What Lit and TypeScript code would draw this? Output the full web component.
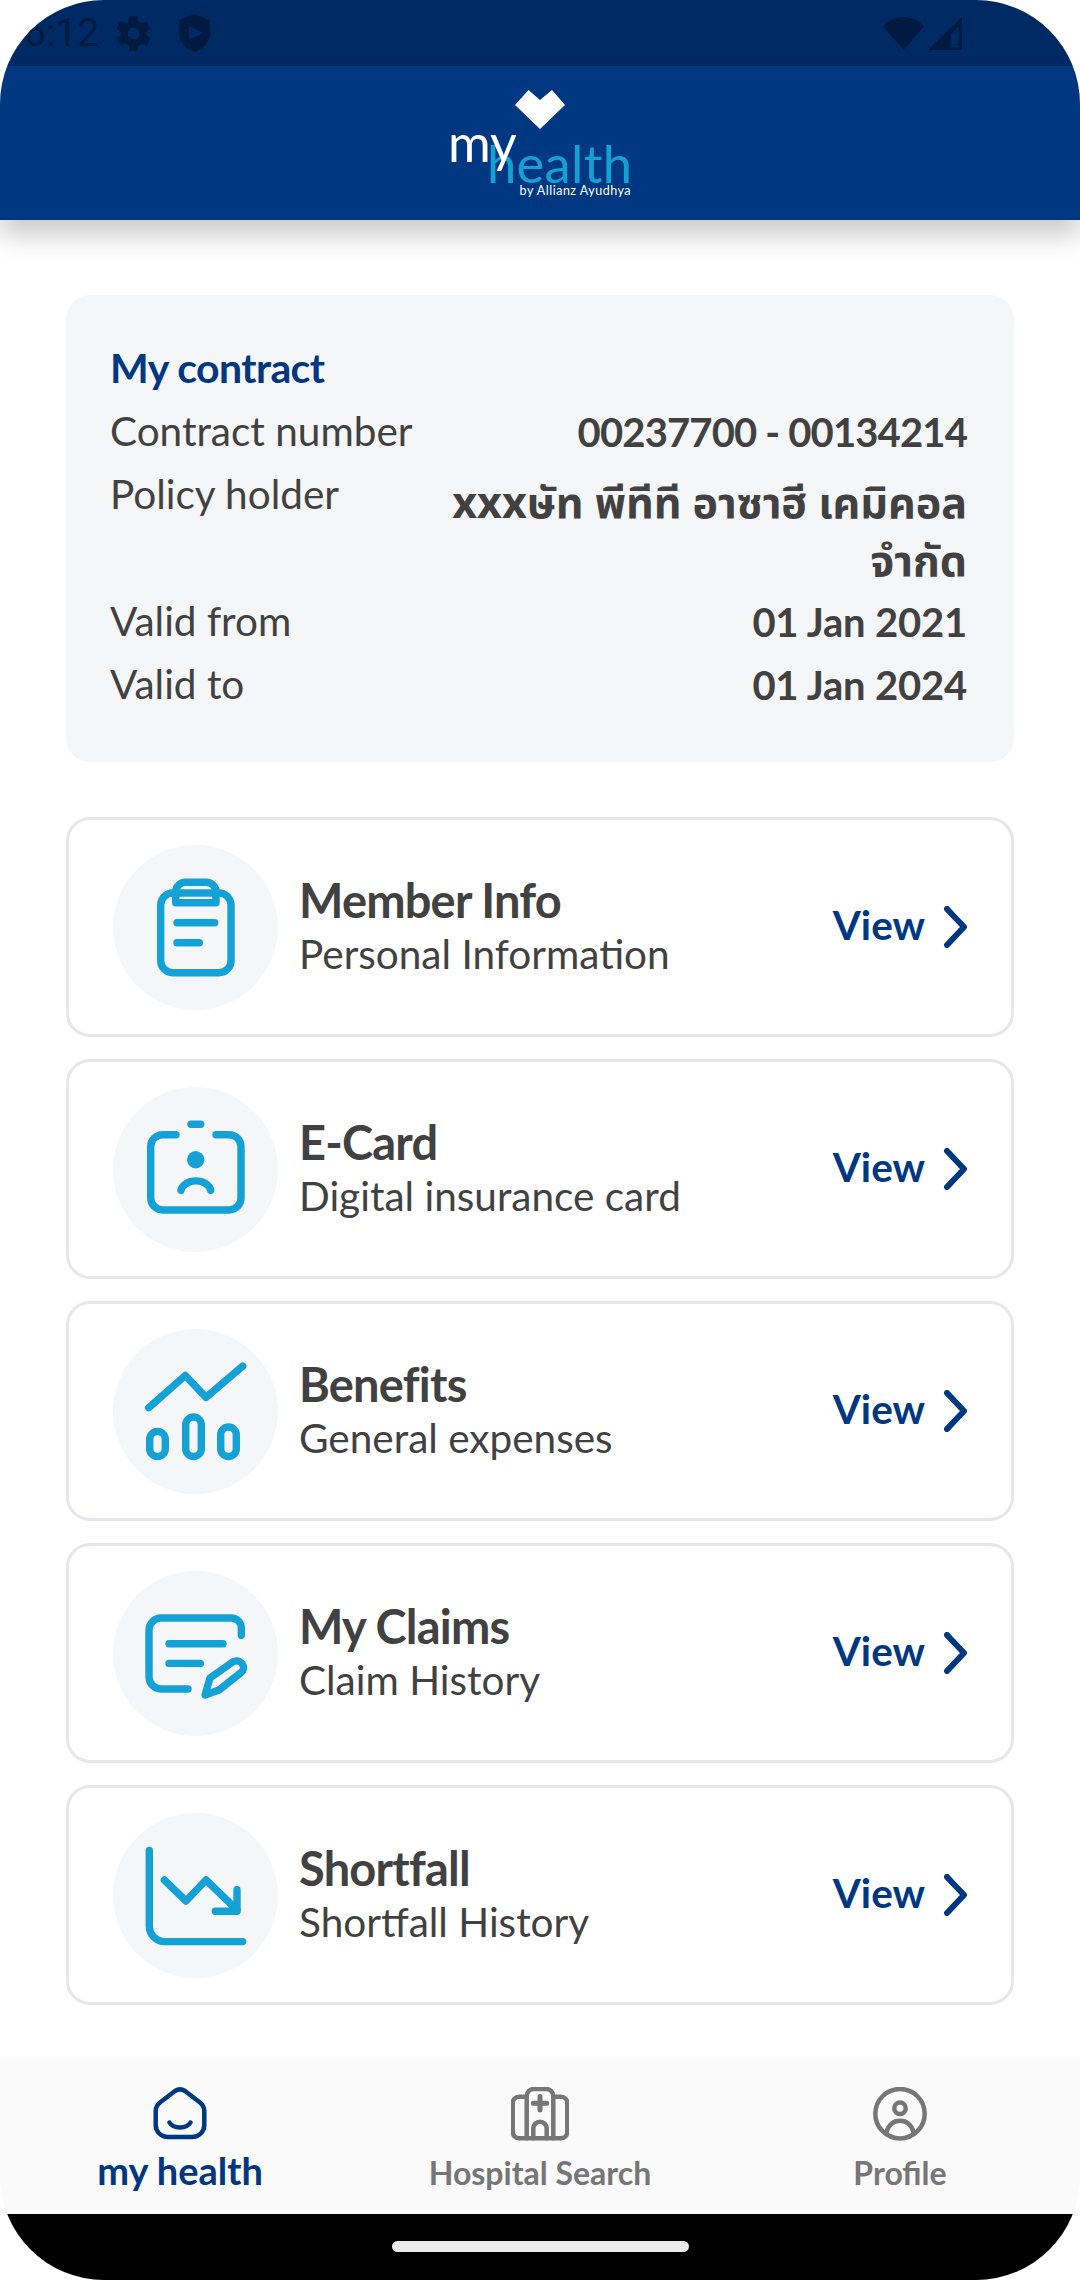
import { LitElement, html, css, svg } from "lit";
import { customElement } from "lit/decorators.js";

const iconMember = svg`
  <rect x="47.7" y="48" width="70.3" height="79.7" rx="12"/>
  <path d="M62.7 57.7V47a9.7 9.7 0 0 1 9.7-9.7h20.9A9.7 9.7 0 0 1 103 47v10.7z"/>
  <path d="M64 77.7h37.7M64 97.7h22.3"/>`;
const iconCard = svg`
  <path d="M63 47.7H49.7a12 12 0 0 0-12 12V111a12 12 0 0 0 12 12H116a12 12 0 0 0 12-12V59.7a12 12 0 0 0-12-12h-13"/>
  <path d="M78 37.3h9.7"/>
  <circle class="fill" cx="82.7" cy="72.7" r="8.7"/>
  <path d="M68 103.3a15 11 0 0 1 29.7 0"/>`;
const iconBenefits = svg`
  <path d="M35.7 78.7L72.3 46.5 93 68.4 129.7 37.1"/>
  <rect x="36.7" y="102.5" width="15.6" height="25" rx="7.8"/>
  <rect x="72.7" y="88" width="15.6" height="39.5" rx="7.8"/>
  <rect x="107.7" y="98" width="15.6" height="29.5" rx="7.8"/>`;
const iconClaims = svg`
  <path d="M128.3 64.3V57a10 10 0 0 0-10-10H48a12 12 0 0 0-12 12v47a12 12 0 0 0 12 12h27"/>
  <path d="M56 72.8h54M56 92.4h31.3"/>
  <path d="M92 124l5-17 22-15.500c3.500-2.500 7.500-2 10 1s2 7-1.500 9.500L106 119z"/>`;
const iconShortfall = svg`
  <path d="M36.300 37.500V113a15.600 15.600 0 0 0 15.600 15.600H129.700"/>
  <path d="M51.300 67L73 88 93 67 124 97"/>
  <path d="M124 76.800V98.200H102.300"/>`;

const rows = [
  { t: "Member Info", s: "Personal Information", i: iconMember },
  { t: "E-Card", s: "Digital insurance card", i: iconCard },
  { t: "Benefits", s: "General expenses", i: iconBenefits },
  { t: "My Claims", s: "Claim History", i: iconClaims },
  { t: "Shortfall", s: "Shortfall History", i: iconShortfall },
];

@customElement("app-root")
export class AppRoot extends LitElement {
  static styles = css`
    :host { display: block; width: 1080px; height: 2280px; background: #fff; overflow: hidden;
      font-family: "Lato", "Noto Sans", "Noto Sans Thai", sans-serif; color: #414141; }
    * { box-sizing: border-box; }
    .screen { width: 1080px; height: 2280px; border-radius: 104px; overflow: hidden; background: #fff;
      display: flex; flex-direction: column; }
    .status { height: 66px; flex: none; background: #002a63; display: flex; align-items: center;
      padding: 0 118px 0 24px; color: #001a42; }
    .time { font: 400 39px Roboto, sans-serif; width: 93px; }
    .status svg { display: block; fill: #001a42; }
    .shield { margin-left: 29px; }
    .wifi { margin-left: auto; }
    .signal { margin-left: 4px; }
    .header { height: 154px; flex: none; background: #003781; display: flex; justify-content: center;
      box-shadow: 0 16px 24px rgba(0,0,0,.2); position: relative; }
    .logo { position: relative; width: 182px; height: 154px; }
    .logo > * { position: absolute; white-space: nowrap; line-height: 1; }
    .heart { left: 66px; top: 24px; }
    .my { left: -1px; top: 50px; font-size: 52px; font-weight: 400; color: #fff; z-index: 1; }
    .health { left: 38px; top: 71px; font-size: 52.500px; font-weight: 400; color: #13a0d3; letter-spacing: .3px; }
    .by { right: 0; top: 119px; font-size: 12.500px; font-weight: 400; color: #fff; letter-spacing: .5px; }
    main { flex: 1; padding: 75px 66px 0; display: flex; flex-direction: column; }
    .contract { height: 467px; flex: none; background: #f5f6f8; border-radius: 24px; padding: 43px 47px 0 44px; }
    .contract h2 { margin: 0 0 3px; font-size: 41px; line-height: 60px; font-weight: 700; color: #003781; letter-spacing: -.57px; }
    .kv { display: flex; justify-content: space-between; font-size: 40.500px; line-height: 63px; }
    .kv .k { flex: none; font-weight: 400; line-height: 60px; }
    .kv .v { font-size: 40px; font-weight: 700; text-align: right; max-width: 560px; letter-spacing: -.2px; }
    .kv .v.num { letter-spacing: -.85px; }
    .kv .v.th { font-family: "Noto Sans", "Lato", "Noto Sans Thai", sans-serif; font-size: 43px; line-height: 58px; padding: 9px 0 2px; letter-spacing: 0; }
    .list { margin-top: 55px; display: flex; flex-direction: column; gap: 22px; }
    .row { height: 220px; border: 3px solid #e6e7eb; border-radius: 24px; background: #fff; display: flex;
      align-items: center; padding: 0 44px 0 44px; }
    .circle { width: 165px; height: 165px; border-radius: 50%; background: #f5f6f8; flex: none; }
    .circle svg { display: block; fill: none; stroke: #14a1d6; stroke-width: 7.400; stroke-linecap: round; stroke-linejoin: round; }
    .circle .fill { fill: #14a1d6; stroke: none; }
    .txt { margin-left: 21px; flex: 1; }
    .t { font-size: 47px; font-weight: 700; line-height: 54px; letter-spacing: -.8px; }
    .s { font-size: 40.500px; font-weight: 400; line-height: 54px; }
    .view { font-size: 40.500px; font-weight: 700; color: #003781; margin-bottom: 5px; }
    .chev { margin-left: 18px; display: block; fill: none; stroke: #003781; stroke-width: 6; stroke-linecap: round; stroke-linejoin: round; }
    nav { height: 155px; flex: none; background: #fafafa; display: grid; grid-template-columns: repeat(3, 360px); padding-top: 28px; box-shadow: 0 -2px 3px rgba(0,0,0,.02); }
    .tab { display: flex; flex-direction: column; align-items: center; color: #767676; font-size: 32px; font-weight: 700; }
    .tab.on { color: #003781; font-size: 38px; }
    .tab svg { display: block; fill: none; stroke: currentColor; stroke-width: 4.500; stroke-linecap: round; stroke-linejoin: round; }
    .tab span { line-height: 40px; margin-top: 12px; white-space: nowrap; }
    .tab.on span { margin-top: 9px; }
    .gesture { height: 66px; flex: none; background: #000; display: flex; justify-content: center; padding-top: 27px; }
    .pill { width: 297px; height: 11px; border-radius: 6px; background: #ebebeb; }
  `;

  render() {
    return html`<div class="screen">
      <div class="status">
        <span class="time">6:12</span>
        <svg width="33" height="35" viewBox="2.400 2 19.200 20"><path d="M19.400 13a7.500 7.500 0 0 0 0-2l2.100-1.600a.5.500 0 0 0 .1-.7l-2-3.400a.5.500 0 0 0-.6-.2l-2.500 1a7.300 7.300 0 0 0-1.700-1l-.4-2.700a.5.500 0 0 0-.5-.4h-4a.5.500 0 0 0-.5.400l-.4 2.700a7.300 7.300 0 0 0-1.700 1l-2.500-1a.5.500 0 0 0-.6.200l-2 3.400a.5.500 0 0 0 .1.700L4.600 11a7.500 7.500 0 0 0 0 2l-2.100 1.600a.5.500 0 0 0-.1.700l2 3.400c.1.200.4.300.6.200l2.500-1c.5.400 1.100.7 1.700 1l.4 2.700c0 .2.200.4.500.4h4c.3 0 .5-.2.500-.4l.4-2.700c.6-.3 1.200-.6 1.700-1l2.500 1c.2.100.5 0 .6-.2l2-3.400a.5.500 0 0 0-.1-.7zM12 15.500a3.500 3.500 0 1 1 0-7 3.500 3.500 0 0 1 0 7z"/></svg>
        <svg class="shield" width="31" height="38" viewBox="0 0 31 38"><path fill-rule="evenodd" d="M15.500 0L31 6v13c0 9-6.500 16-15.500 19C6.500 35 0 28 0 19V6zM10 12v14l14-7z"/></svg>
        <svg class="wifi" width="41" height="33" viewBox="0 0 41 33"><path d="M20.500 33L0 9C5 3.500 12 0 20.500 0S36 3.500 41 9z"/></svg>
        <svg class="signal" width="34" height="33" viewBox="0 0 34 33"><path fill-rule="evenodd" d="M34 0V33H0zM30.700 9.300L22.700 17.700V30.500h8z"/></svg>
      </div>
      <div class="header">
        <div class="logo">
          <svg class="heart" width="50" height="40" viewBox="0 0 50 40"><path fill="#fff" d="M0 15L13.500 0 25 10 37 0l13 15-25 24z"/></svg>
          <span class="health">health</span>
          <span class="my">my</span>
          <span class="by">by Allianz Ayudhya</span>
        </div>
      </div>
      <main>
        <section class="contract">
          <h2>My contract</h2>
          <div class="kv"><span class="k">Contract number</span><span class="v num">00237700 - 00134214</span></div>
          <div class="kv"><span class="k">Policy holder</span><span class="v th">xxxษัท พีทีที อาซาฮี เคมิคอล จำกัด</span></div>
          <div class="kv"><span class="k">Valid from</span><span class="v">01 Jan 2021</span></div>
          <div class="kv"><span class="k">Valid to</span><span class="v">01 Jan 2024</span></div>
        </section>
        <div class="list">
          ${rows.map(r => html`<div class="row">
            <div class="circle"><svg width="165" height="165" viewBox="0 0 165 165">${r.i}</svg></div>
            <div class="txt"><div class="t">${r.t}</div><div class="s">${r.s}</div></div>
            <span class="view">View</span>
            <svg class="chev" width="24" height="42" viewBox="0 0 24 42"><path d="M4 3l17 18L4 39"/></svg>
          </div>`)}
        </div>
      </main>
      <nav>
        <div class="tab on">
          <svg width="58" height="54" viewBox="0 0 58 54"><path d="M24 4L9 15.500Q4.700 19 4.700 24V38a12 12 0 0 0 12 12H41.300a12 12 0 0 0 12-12V24Q53.300 19 49 15.500L34 4Q29 .8 24 4z"/><path d="M18.500 35.500C22 42 36 42 39.500 35.500"/></svg>
          <span>my health</span>
        </div>
        <div class="tab">
          <svg width="58" height="54" viewBox="0 0 58 54"><path d="M15.700 9.700H8a6.300 6.300 0 0 0-6.300 6.300V45a6.300 6.300 0 0 0 6.300 6.300H50a6.300 6.300 0 0 0 6.300-6.300V16a6.300 6.300 0 0 0-6.300-6.300H42.300"/><path d="M15.700 51.300V9a7 7 0 0 1 7-7H35.300a7 7 0 0 1 7 7V51.300M22.300 51.300V41.400a6.700 6.700 0 0 1 13.400 0V51.300"/><path stroke-width="5" d="M29 9.600V23M22.300 16.300H35.700"/></svg>
          <span>Hospital Search</span>
        </div>
        <div class="tab">
          <svg width="58" height="54" viewBox="0 0 58 54"><circle cx="29" cy="26.700" r="24.700"/><circle cx="29" cy="21.300" r="5.700"/><path d="M15 46C18 36 24 33.700 29 33.700S40 36 43 46"/></svg>
          <span>Profile</span>
        </div>
      </nav>
      <div class="gesture"><div class="pill"></div></div>
    </div>`;
  }
}
